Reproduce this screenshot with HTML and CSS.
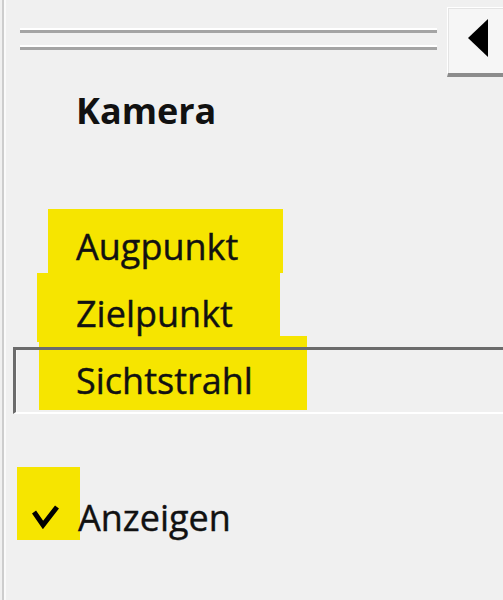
FILE: index.html
```html
<!DOCTYPE html>
<html lang="de">
<head>
    <meta charset="UTF-8">
    <meta name="viewport" content="width=device-width, initial-scale=1.0">
    <title>Kamera</title>
    <link rel="stylesheet" href="styles.css">
</head>
<body>
    <!-- Textmarker-Markierungen, liegen unter dem Text -->
    <svg class="marker" width="503" height="600" viewBox="0 0 503 600">
        <polygon points="48,209 283,209 283,273 280,273 280,336 307,336 307,410 39,410 39,342 37,342 37,273 48,273" />
        <rect x="17" y="467" width="63" height="73" />
    </svg>

    <div class="panel">
        <div class="toolbar">
            <div class="grip">
                <div class="grip-line"></div>
                <div class="grip-line"></div>
            </div>
            <button class="collapse" title="Einklappen">
                <svg width="20" height="38" viewBox="0 0 20 38"><polygon points="0,19 20,0 20,38" fill="#000"/></svg>
            </button>
        </div>

        <h2 class="section-title">Kamera</h2>

        <ul class="options">
            <li class="option">Augpunkt</li>
            <li class="option">Zielpunkt</li>
            <li class="option selected">Sichtstrahl</li>
        </ul>

        <label class="check">
            <svg class="check-mark" width="28" height="25" viewBox="0 0 28 25"><polyline points="2,8 11,21 25,3" fill="none" stroke="#000" stroke-width="5"/></svg>
            <span>Anzeigen</span>
        </label>
    </div>
</body>
</html>
```

FILE: styles.css
```css
html, body {
    margin: 0;
    height: 100%;
    overflow: hidden;
}
body {
    background-color: #f0f0f0;
    font-family: "Open Sans", "Noto Sans", sans-serif;
    font-size: 36px;
    color: #111;
    position: relative;
}
.panel {
    position: relative;
    z-index: 1;
    margin-left: 2px;
    border-left: 2px solid #cdcdcd;
    box-shadow: inset 2px 0 0 #fafafa;
    min-height: 100%;
    -webkit-text-stroke: 0.4px #111;
}
.toolbar {
    display: flex;
    align-items: flex-start;
    height: 78px;
    padding-left: 16px;
}
.grip {
    flex: 1;
    margin-top: 28px;
    margin-right: 10px;
}
.grip-line {
    height: 3px;
    border-top: 2px solid #ffffff;
    background: #a4a4a4;
    margin-bottom: 12px;
}
.collapse {
    width: 56px;
    height: 70px;
    margin-top: 7px;
    padding: 11px 0 0 20px;
    display: flex;
    align-items: flex-start;
    background: #f6f6f6;
    border: none;
    border-left: 1px solid #ffffff;
    border-top: 1px solid #ffffff;
    border-bottom: 4px solid #8c8c8c;
    box-shadow: inset 1px 1px 0 #e4e4e4;
    box-sizing: border-box;
}
.section-title {
    margin: 13px 0 0;
    padding-left: 72px;
    font-size: 36px;
    font-weight: 700;
    line-height: 40px;
    -webkit-text-stroke: 0;
}
.options {
    list-style: none;
    margin: 82px 0 0;
    padding: 0;
}
.option {
    height: 67px;
    line-height: 67px;
    padding-left: 72px;
    box-sizing: border-box;
}
.option.selected {
    margin-left: 9px;
    margin-right: -20px;
    padding-left: 60px;
    line-height: 62px;
    border-top: 3px solid #6b6b6b;
    border-left: 3px solid #6b6b6b;
    border-bottom: 2px solid #ffffff;
    box-shadow: inset 1px 0 0 #f8f8f8;
}
.check {
    display: flex;
    align-items: center;
    height: 67px;
    margin-top: 70px;
    padding-left: 28px;
}
.check-mark {
    margin-top: -2px;
    margin-right: 18px;
}
.marker {
    position: absolute;
    left: 0;
    top: 0;
    z-index: 0;
    pointer-events: none;
    fill: #f6e500;
}
```
